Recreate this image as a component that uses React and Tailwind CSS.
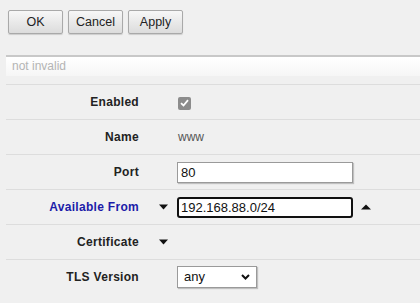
import React from 'react';

const DownTri = () => (
  <svg width="9" height="6" viewBox="0 0 9 6">
    <path d="M0 0.5 L9 0.5 L4.5 5.5 Z" fill="#111" />
  </svg>
);

const UpTri = () => (
  <svg width="10" height="6" viewBox="0 0 10 6">
    <path d="M0 5.5 L10 5.5 L5 0.5 Z" fill="#111" />
  </svg>
);

const Btn = ({ children }) => (
  <button className="w-[55px] h-[24px] rounded-[2px] border border-[#a9a9a9] bg-gradient-to-b from-[#f7f7f7] to-[#dcdcdc] text-[12.5px] text-[#222] shadow-[0_1px_1px_rgba(0,0,0,0.15)]">
    {children}
  </button>
);

const Row = ({ label, blue, tri, children }) => (
  <div className="h-[35px] border-t border-[#dddddd] flex items-center">
    <div
      className={`w-[133px] text-right text-[12px] font-bold tracking-[0.3px] ${
        blue ? 'text-[#1c1ca8]' : 'text-[#222]'
      }`}
    >
      {label}
    </div>
    <div className="w-[38px] pl-[20px] flex items-center">{tri && <DownTri />}</div>
    <div className="flex items-center">{children}</div>
  </div>
);

export default function App() {
  return (
    <div className="w-[420px] h-[303px] bg-[#f0f0f0] overflow-hidden font-['Liberation_Sans',Arial,sans-serif]">
      <div className="flex gap-[5px] pl-2 pt-[10px]">
        <Btn>OK</Btn>
        <Btn>Cancel</Btn>
        <Btn>Apply</Btn>
      </div>

      <div className="ml-[6px] mt-[21px] h-[21px] border-t-2 border-[#c8c8c8] bg-gradient-to-b from-white to-[#f6f6f6] pl-[6px] text-[12px] leading-[19px] text-[#b4b4b4]">
        not invalid
      </div>

      <div className="ml-[6px] mt-[8px]">
        <Row label="Enabled">
          <div className="w-[13px] h-[13px] rounded-[2px] bg-[#8c8c8c] flex items-center justify-center ml-[1px] mt-[2px]">
            <svg width="9" height="8" viewBox="0 0 9 8">
              <path d="M1 4.2 L3.5 6.5 L8 1.2" stroke="#fff" strokeWidth="1.8" fill="none" />
            </svg>
          </div>
        </Row>
        <Row label="Name">
          <span className="text-[12px] text-[#555] pl-[1px]">www</span>
        </Row>
        <Row label="Port">
          <div className="w-[176px] h-[21px] bg-white border border-[#9a9a9a] shadow-[1px_1px_1px_rgba(0,0,0,0.2)] pl-[3px] text-[13px] leading-[19px] text-[#111]">
            80
          </div>
        </Row>
        <Row label="Available From" blue tri>
          <div className="w-[176px] h-[21px] bg-white border-2 border-[#111] rounded-[3px] pl-[2px] text-[13px] leading-[17px] text-[#111]">
            192.168.88.0/24
          </div>
          <div className="ml-[8px]">
            <UpTri />
          </div>
        </Row>
        <Row label="Certificate" tri />
        <Row label="TLS Version">
          <div className="w-[80px] h-[22px] bg-white border border-[#9a9a9a] shadow-[1px_1px_1px_rgba(0,0,0,0.2)] flex items-center justify-between pl-[6px] pr-[6px] text-[13px] text-[#111]">
            <span>any</span>
            <svg width="9" height="6" viewBox="0 0 9 6">
              <path d="M1 1 L4.5 4.5 L8 1" stroke="#111" strokeWidth="2" fill="none" />
            </svg>
          </div>
        </Row>
      </div>
    </div>
  );
}
